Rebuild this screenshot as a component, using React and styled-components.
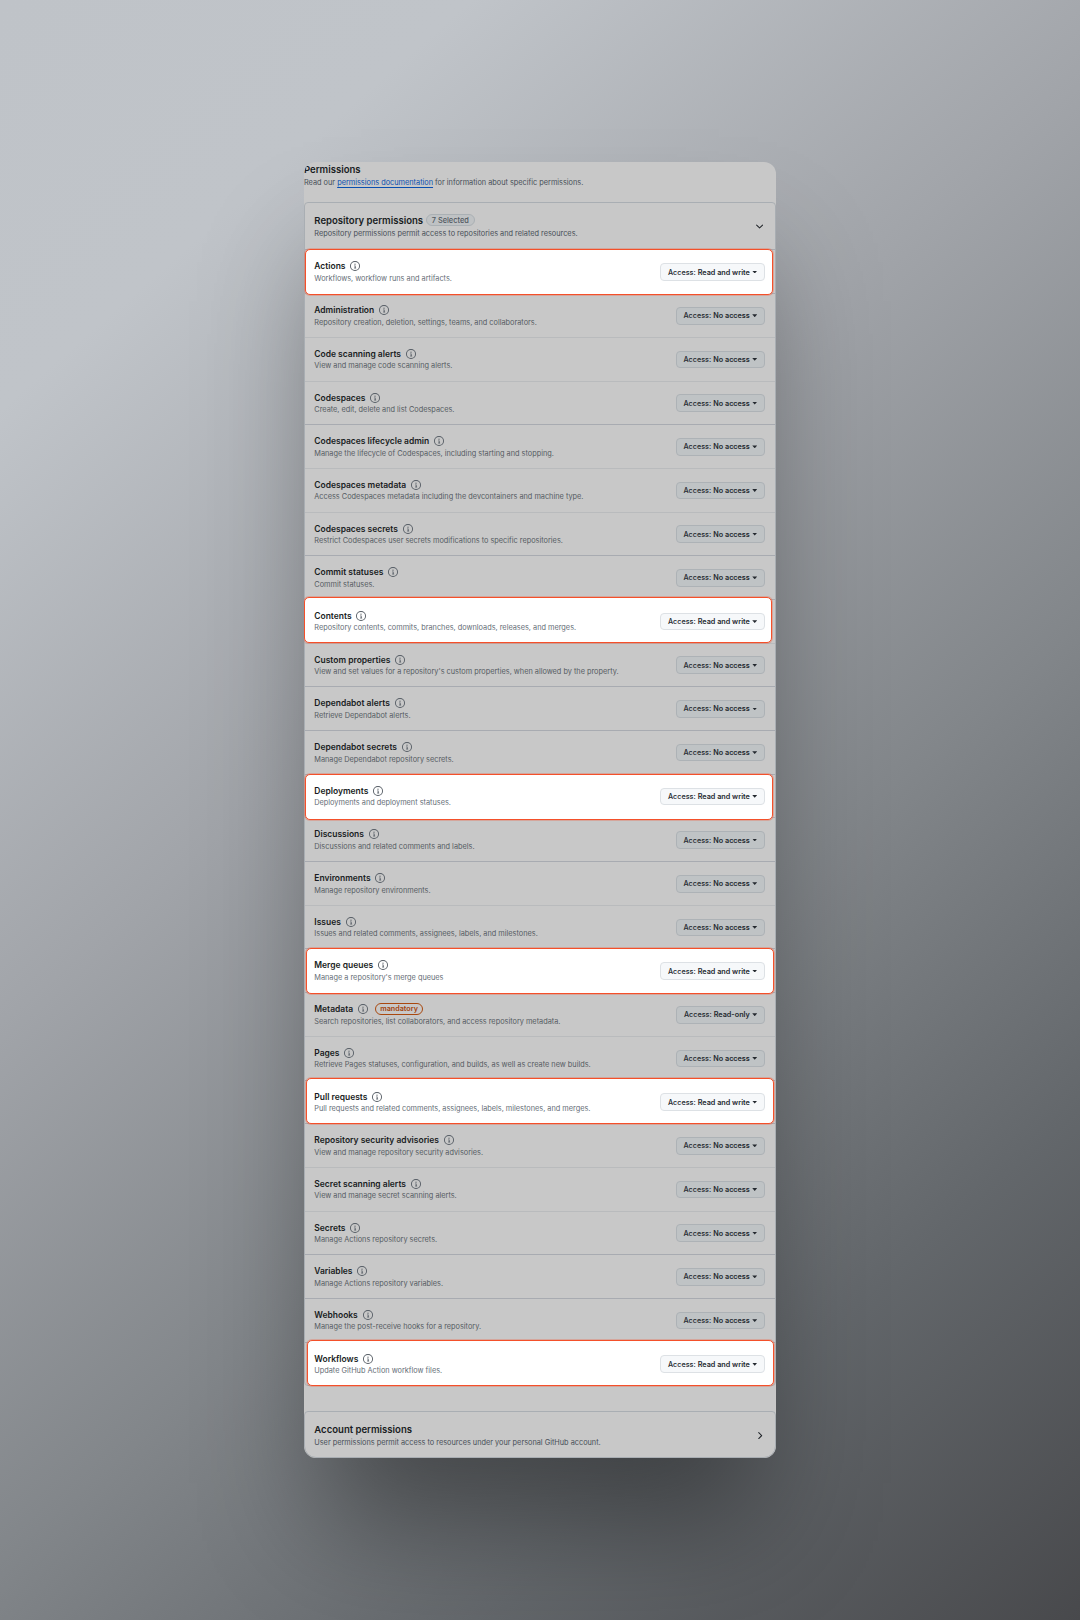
import React from 'react';
import styled, { createGlobalStyle } from 'styled-components';

const GlobalStyle = createGlobalStyle`
  *, *::before, *::after { box-sizing: border-box; }
  body { margin: 0; }
`;

const Page = styled.div`
  display: flex;
  justify-content: center;
  align-items: flex-start;
  width: 1080px;
  height: 1620px;
  padding-top: 162px;
  overflow: hidden;
  background: linear-gradient(139deg, #bfc3c8 0%, #c0c4c9 16%, #a1a4a9 40%, #82868a 61%, #63676b 80%, #48494c 100%);
  font-family: Inter, 'Liberation Sans', sans-serif;
  color: #181c22;
`;

const Card = styled.main`
  display: flex;
  flex-direction: column;
  width: 472px;
  height: 1295.5px;
  overflow: hidden;
  border-radius: 12px;
  background: #c8c8c8;
  box-shadow: 0 82px 110px -18px rgba(0, 0, 0, 0.38);
`;

const Intro = styled.header`
  height: 40px;
  padding-top: 1px;
`;

const Heading = styled.h2`
  margin: 0;
  font-size: 9.55px;
  line-height: 14px;
  font-weight: 600;
  white-space: nowrap;
`;

const Description = styled.p`
  margin: 0;
  font-size: 7.33px;
  line-height: 11px;
  color: ${(p) => (p.$strong ? '#474e57' : p.$light ? '#656d76' : '#555b62')};
  white-space: nowrap;
`;

const DocLink = styled.a`
  color: #0a4fb0;
  text-decoration: underline;
  text-underline-offset: 1.5px;
`;

const Group = styled.section`
  border: 1px solid #a9aeb3;
  border-radius: 4px 4px ${(p) => (p.$last ? '12px 12px' : '4px 4px')};
  margin-bottom: ${(p) => (p.$last ? 0 : 25)}px;
  height: ${(p) => p.$height}px;
`;

const GroupHeader = styled.div`
  display: flex;
  align-items: center;
  justify-content: space-between;
  height: 46.5px;
  padding: 0 9.5px 0 9.3px;
`;

const HeadingRow = styled.div`
  display: flex;
  align-items: center;
  gap: 2.8px;
  height: 14px;
`;

const CountBadge = styled.span`
  display: flex;
  align-items: center;
  height: 12px;
  margin-top: -0.4px;
  padding: 0 4.8px;
  border: 1px solid #aab0b4;
  border-radius: 6px;
  background: #bfc2c4;
  color: #50575f;
  font-size: 7.4px;
  font-weight: 500;
`;

const Row = styled.div`
  position: relative;
  z-index: ${(p) => (p.$highlighted ? 1 : 0)};
  display: flex;
  align-items: center;
  justify-content: space-between;
  height: 43.7px;
  padding: 0 9.6px 0 9.3px;
  border-top: 1px solid ${(p) => (p.$faint ? '#b9bbbd' : '#a8abb1')};
`;

const Highlight = styled.div`
  position: absolute;
  z-index: -1;
  left: ${(p) => p.$x}px;
  top: ${(p) => p.$y}px;
  width: 467.5px;
  height: 45.5px;
  border: 1px solid #f4502a;
  border-radius: 5px;
  background: #fff;
  box-shadow: 0 0 0 1px rgba(244, 80, 42, 0.28);
`;

const RowText = styled.div`
  display: flex;
  flex-direction: column;
  gap: 0.5px;
  padding-top: 0.9px;
`;

const RowTitle = styled.div`
  display: flex;
  align-items: center;
  height: 12px;
  font-size: 8.47px;
  line-height: 12px;
  font-weight: 600;
  white-space: nowrap;
`;

const Icon = styled.svg`
  flex: none;
  overflow: visible;
  width: ${(p) => p.$size}px;
  height: ${(p) => p.$size}px;
  margin-left: ${(p) => p.$gap || 0}px;
  fill: ${(p) => p.$color || '#1f2328'};
`;

const MandatoryBadge = styled.span`
  display: flex;
  align-items: center;
  height: 12.6px;
  margin-left: 7.2px;
  padding: 0 4.1px;
  border: 1px solid #a9480f;
  border-radius: 6.3px;
  color: #a2420c;
  font-size: 7.2px;
  font-weight: 600;
`;

const AccessButton = styled.button`
  display: flex;
  align-items: center;
  justify-content: flex-end;
  width: ${(p) => (p.$highlighted ? 105.4 : 89)}px;
  height: 17.6px;
  margin: 0.6px 0 0;
  padding: 0 7.2px 0 0;
  border: 1px solid ${(p) => (p.$highlighted ? '#dde1e5' : '#adb2b6')};
  border-radius: 4px;
  background: ${(p) => (p.$highlighted ? '#f6f8fa' : '#bfc3c5')};
  color: #24292f;
  font-family: inherit;
  font-size: 7.25px;
  font-weight: 500;
  white-space: nowrap;
`;

const AccessValue = styled.span`
  margin-left: 2px;
  font-weight: 600;
`;

const Caret = styled.span`
  width: 5px;
  height: 2.8px;
  margin-left: 2.4px;
  background: #24292f;
  clip-path: polygon(0 0, 100% 0, 50% 100%);
`;

function InfoIcon() {
  return (
    <Icon viewBox="0 0 16 16" $size={10} $gap={4.9} $color="#565d65">
      <path d="M0 8a8 8 0 1 1 16 0A8 8 0 0 1 0 8Zm8-6.5a6.5 6.5 0 1 0 0 13 6.5 6.5 0 0 0 0-13ZM6.5 7.75A.75.75 0 0 1 7.25 7h1a.75.75 0 0 1 .75.75v2.75h.25a.75.75 0 0 1 0 1.5h-2a.75.75 0 0 1 0-1.5h.25v-2h-.25a.75.75 0 0 1-.75-.75ZM8 6a1 1 0 1 1 0-2 1 1 0 0 1 0 2Z" />
    </Icon>
  );
}

function ChevronDown() {
  return (
    <Icon viewBox="0 0 16 16" $size={11.2}>
      <path d="M12.78 5.22a.749.749 0 0 1 0 1.06l-4.25 4.25a.749.749 0 0 1-1.06 0L3.22 6.28a.749.749 0 1 1 1.06-1.06L8 8.939l3.72-3.719a.749.749 0 0 1 1.06 0Z" />
    </Icon>
  );
}

function ChevronRight() {
  return (
    <Icon viewBox="0 0 16 16" $size={11.2}>
      <path d="M6.22 3.22a.75.75 0 0 1 1.06 0l4.25 4.25a.75.75 0 0 1 0 1.06l-4.25 4.25a.751.751 0 0 1-1.042-.018.751.751 0 0 1-.018-1.042L9.94 8 6.22 4.28a.75.75 0 0 1 0-1.06Z" />
    </Icon>
  );
}

const permissions = [
  { name: 'Actions', text: 'Workflows, workflow runs and artifacts.', mark: [0.4, -1.1] },
  { name: 'Administration', text: 'Repository creation, deletion, settings, teams, and collaborators.' },
  { name: 'Code scanning alerts', text: 'View and manage code scanning alerts.', faint: true },
  { name: 'Codespaces', text: 'Create, edit, delete and list Codespaces.', faint: true },
  { name: 'Codespaces lifecycle admin', text: 'Manage the lifecycle of Codespaces, including starting and stopping.' },
  { name: 'Codespaces metadata', text: 'Access Codespaces metadata including the devcontainers and machine type.', faint: true },
  { name: 'Codespaces secrets', text: 'Restrict Codespaces user secrets modifications to specific repositories.', faint: true },
  { name: 'Commit statuses', text: 'Commit statuses.' },
  { name: 'Contents', text: 'Repository contents, commits, branches, downloads, releases, and merges.', mark: [-0.9, -2.6] },
  { name: 'Custom properties', text: "View and set values for a repository's custom properties, when allowed by the property.", faint: true },
  { name: 'Dependabot alerts', text: 'Retrieve Dependabot alerts.' },
  { name: 'Dependabot secrets', text: 'Manage Dependabot repository secrets.' },
  { name: 'Deployments', text: 'Deployments and deployment statuses.', mark: [0.4, -0.6] },
  { name: 'Discussions', text: 'Discussions and related comments and labels.' },
  { name: 'Environments', text: 'Manage repository environments.' },
  { name: 'Issues', text: 'Issues and related comments, assignees, labels, and milestones.', faint: true },
  { name: 'Merge queues', text: "Manage a repository's merge queues", mark: [1.2, -1.1] },
  { name: 'Metadata', text: 'Search repositories, list collaborators, and access repository metadata.', access: 'Read-only', mandatory: true },
  { name: 'Pages', text: 'Retrieve Pages statuses, configuration, and builds, as well as create new builds.', faint: true },
  { name: 'Pull requests', text: 'Pull requests and related comments, assignees, labels, milestones, and merges.', mark: [1.2, -2.3] },
  { name: 'Repository security advisories', text: 'View and manage repository security advisories.' },
  { name: 'Secret scanning alerts', text: 'View and manage secret scanning alerts.', faint: true },
  { name: 'Secrets', text: 'Manage Actions repository secrets.', faint: true },
  { name: 'Variables', text: 'Manage Actions repository variables.' },
  { name: 'Webhooks', text: 'Manage the post-receive hooks for a repository.' },
  { name: 'Workflows', text: 'Update GitHub Action workflow files.', mark: [1.6, -2.4] },
];

function PermissionRow({ item }) {
  const on = Boolean(item.mark);
  return (
    <Row $faint={item.faint} $highlighted={on}>
      {on && <Highlight $x={item.mark[0]} $y={item.mark[1]} />}
      <RowText>
        <RowTitle>
          {item.name}
          <InfoIcon />
          {item.mandatory && <MandatoryBadge>mandatory</MandatoryBadge>}
        </RowTitle>
        <Description $light={on}>{item.text}</Description>
      </RowText>
      <AccessButton $highlighted={on}>
        Access:
        <AccessValue>{item.access || (on ? 'Read and write' : 'No access')}</AccessValue>
        <Caret />
      </AccessButton>
    </Row>
  );
}

export default function App() {
  return (
    <Page>
      <GlobalStyle />
      <Card>
        <Intro>
          <Heading>Permissions</Heading>
          <Description $strong>
            Read our <DocLink>permissions documentation</DocLink> for information about specific permissions.
          </Description>
        </Intro>
        <Group $height={1184.5}>
          <GroupHeader>
            <div>
              <HeadingRow>
                <Heading>Repository permissions</Heading>
                <CountBadge>7 Selected</CountBadge>
              </HeadingRow>
              <Description $strong>
                Repository permissions permit access to repositories and related resources.
              </Description>
            </div>
            <ChevronDown />
          </GroupHeader>
          {permissions.map((item) => (
            <PermissionRow key={item.name} item={item} />
          ))}
        </Group>
        <Group $height={46.2} $last>
          <GroupHeader>
            <div>
              <Heading>Account permissions</Heading>
              <Description $strong>
                User permissions permit access to resources under your personal GitHub account.
              </Description>
            </div>
            <ChevronRight />
          </GroupHeader>
        </Group>
      </Card>
    </Page>
  );
}
